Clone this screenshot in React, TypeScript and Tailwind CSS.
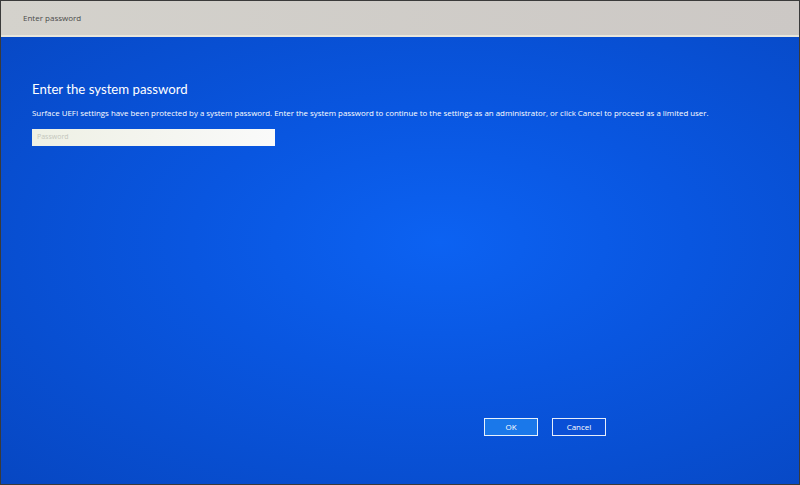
import React from "react";

export default function App() {
  return (
    <div className="w-[800px] h-[485px] bg-[#3a3a3a] p-px overflow-hidden" style={{ fontFamily: '"Open Sans", "Noto Sans", sans-serif' }}>
      <div className="w-full h-full flex flex-col bg-[radial-gradient(ellipse_at_55%_50%,#0c62f2_0%,#0956e0_40%,#0747c2_100%)]">
        <div className="h-[36px] shrink-0 bg-[linear-gradient(to_right,#d4d2cc,#ccc8c5)] border-b-2 border-[#e8e6dc] flex items-center pl-[22px]">
          <span className="text-[8px] text-[#4a4a4a]">Enter password</span>
        </div>
        <div className="flex-1 flex flex-col pl-[31px] pr-[20px]">
          <h1 className="mt-[46px] text-[13.2px] text-white leading-none" style={{ fontFamily: 'Lato, "Open Sans", sans-serif' }}>Enter the system password</h1>
          <p className="mt-[14px] text-[7.9px] text-white leading-none whitespace-nowrap">
            Surface UEFI settings have been protected by a system password. Enter the system password to continue to the settings as an administrator, or click Cancel to proceed as a limited user.
          </p>
          <div className="mt-[11px] w-[243px] h-[17px] bg-[linear-gradient(to_right,#eef0e4,#fafafa)] flex items-center pl-[5px]">
            <span className="text-[7px] text-[#c4c6bc]">Password</span>
          </div>
          <div className="flex-1" />
          <div className="flex gap-[14px] pl-[452px] mb-[48px]">
            <div className="w-[54px] h-[18px] bg-[#1a78ea] border-[1.5px] border-white/90 flex items-center justify-center">
              <span className="text-[8px] text-white">OK</span>
            </div>
            <div className="w-[54px] h-[18px] bg-[#0a4fd6] border-[1.5px] border-white/90 flex items-center justify-center">
              <span className="text-[8px] text-white">Cancel</span>
            </div>
          </div>
        </div>
      </div>
    </div>
  );
}
